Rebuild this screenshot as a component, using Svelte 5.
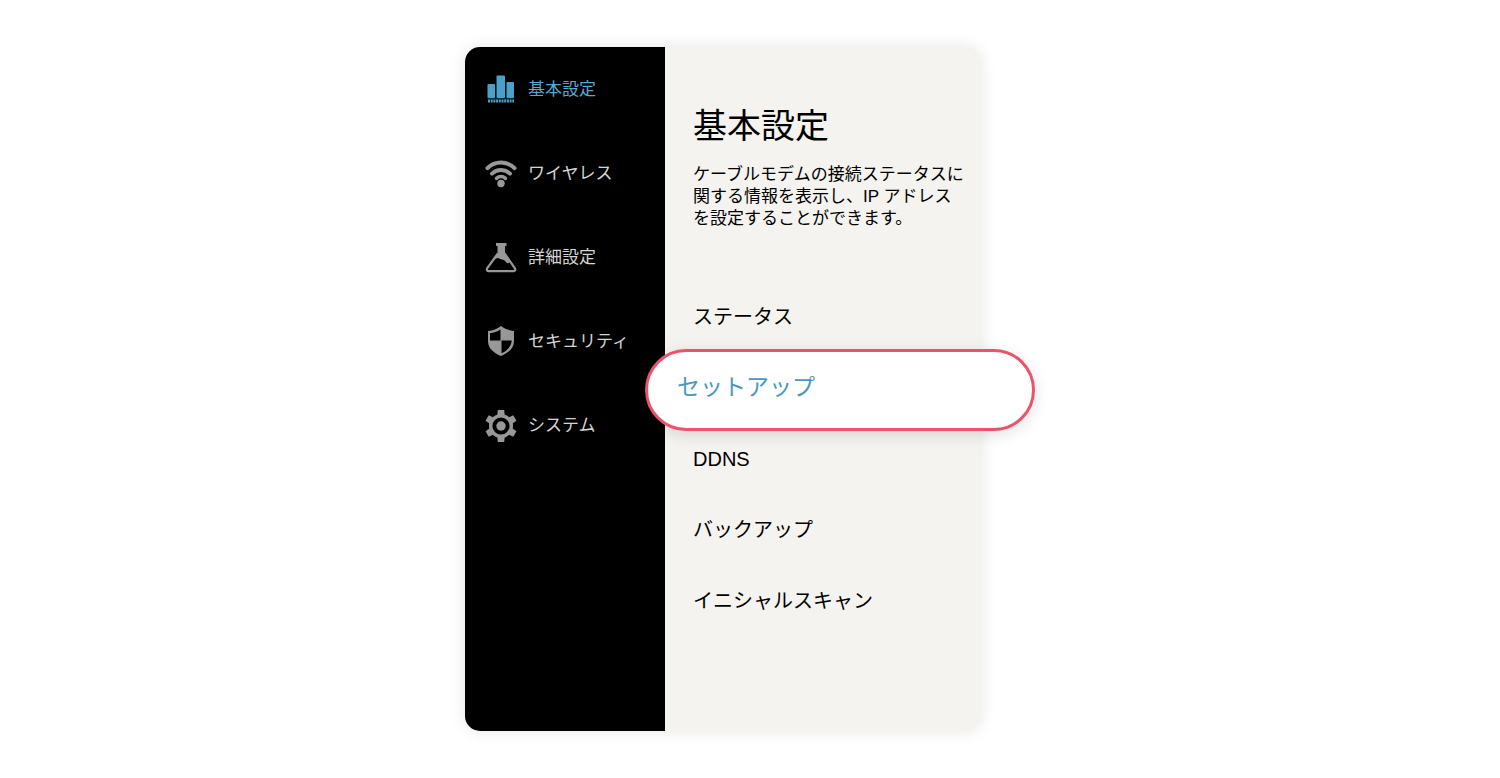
<script>
  const sections = [
    { id: 'basic', label: '基本設定' },
    { id: 'wireless', label: 'ワイヤレス' },
    { id: 'advanced', label: '詳細設定' },
    { id: 'security', label: 'セキュリティ' },
    { id: 'system', label: 'システム' }
  ];

  const pages = ['ステータス', 'セットアップ', 'DDNS', 'バックアップ', 'イニシャルスキャン'];

  let section = 'basic';
  let page = 'セットアップ';
</script>

<main>
  <div class="router">
    <nav class="sidebar">
      {#each sections as item}
        <a href="#{item.id}" class:active={section === item.id} on:click={() => (section = item.id)}>
          <svg viewBox="0 0 32 32" width="32" height="32" fill="currentColor" aria-hidden="true">
            {#if item.id === 'basic'}
              <rect x="2.5" y="11" width="7.5" height="14" rx="1" />
              <rect x="11.5" y="2.500" width="8.5" height="22.500" rx="1" />
              <rect x="21.5" y="9" width="7.5" height="16" rx="1" />
              <path d="M2.500 25.800h26.500" fill="none" stroke="currentColor" stroke-width="1" opacity=".4" />
              <path d="M3 28h26" fill="none" stroke="currentColor" stroke-width="3" stroke-dasharray="2 .7" />
            {:else if item.id === 'wireless'}
              <g fill="none" stroke="currentColor" stroke-width="4" stroke-linecap="round">
                <path d="M2.500 11.200C10 3.600 22 3.600 29.500 11.200" />
                <path d="M7 16.600c5-4.900 13-4.900 18 0" />
                <path d="M11.500 21.300c2.700-2.300 6.300-2.300 9 0" stroke-width="3.500" />
              </g>
              <circle cx="16" cy="26.500" r="3.700" />
            {:else if item.id === 'advanced'}
              <path d="M11 2h10.500v3h-10.500z" />
              <path d="M12.500 4.500h7.500v8l5.500 7.500c-.6 2-2.500 3-4.300 1.200-1.600-1.600-2.300-2.700-4.200-2.700-2-.1-2.600-1.500-4.500-1.500L9 18.500l3.500-6z" />
              <path d="M12.800 12.500L2.300 27c-1 1.700-.2 3.200 1.500 3.200h24.500c1.700 0 2.500-1.500 1.500-3.200L19.600 12.500" fill="none" stroke="currentColor" stroke-width="2.200" />
            {:else if item.id === 'security'}
              <path fill-rule="evenodd" d="M16 1c4 3 8 4.500 13 5v10c0 7-5 11.500-13 15C8 27.500 3 23 3 16V6c5-.5 9-2 13-5zM15.500 4.500C12 6.700 9 7.700 5 8.300v7.200h10.500zM16.500 15.500v12.800c6-3 9.500-6.500 10.300-12.800z" />
            {:else}
              <circle cx="16" cy="17" r="10.300" fill="none" stroke="currentColor" stroke-width="3.400" />
              {#each [0, 60, 120, 180, 240, 300] as angle}
                <path d="M12.800 1h6.400l.6 6.500h-7.600z" transform="rotate({angle} 16 17)" />
              {/each}
              <circle cx="16" cy="17" r="4.700" />
            {/if}
          </svg>
          <span>{item.label}</span>
        </a>
      {/each}
    </nav>

    <section class="panel">
      <h1>基本設定</h1>
      <p>ケーブルモデムの接続ステータスに関する情報を表示し、IP アドレスを設定することができます。</p>
      <ul>
        {#each pages as name}
          <li>
            <a href="#{name}" class:current={page === name} on:click={() => (page = name)}>{name}</a>
          </li>
        {/each}
      </ul>
    </section>
  </div>
</main>

<style>
  :global(body) {
    margin: 0;
    background: #fff;
    font-family: "Liberation Sans", "Noto Sans CJK JP", sans-serif;
  }

  main {
    box-sizing: border-box;
    max-width: 570px;
    margin: 0 auto;
    padding: 47px 54px 47px 0;
  }

  a {
    color: inherit;
    text-decoration: none;
  }

  .router {
    display: grid;
    grid-template-columns: 200px 1fr;
    border-radius: 15px;
    background: #f4f3ef;
    box-shadow: 0 0 16px rgba(0, 0, 0, 0.1);
  }

  .sidebar {
    background: #000;
    color: #d4d4d4;
    border-radius: 15px 0 0 15px;
  }

  .sidebar a {
    display: flex;
    align-items: center;
    gap: 11px;
    height: 84px;
    padding-left: 20px;
    font-size: 17px;
  }

  .sidebar svg {
    flex: none;
    overflow: visible;
    color: #989898;
  }

  .sidebar span {
    padding-bottom: 3px;
  }

  .sidebar .active {
    color: #55aad0;
  }

  .sidebar .active svg {
    color: #4c9fc6;
  }

  .panel {
    padding: 55px 15px 94px 28px;
    color: #000;
  }

  h1 {
    margin: 0 0 14px;
    font-size: 34px;
    font-weight: 400;
    line-height: 48px;
  }

  p {
    margin: 0 0 52px;
    font-size: 17px;
    line-height: 22px;
  }

  ul {
    margin: 0;
    padding: 0;
    list-style: none;
  }

  li {
    position: relative;
    height: 71px;
    font-size: 20px;
    line-height: 71px;
  }

  /* the selected page sits on a pill wider than the panel */
  .current {
    position: absolute;
    box-sizing: border-box;
    top: -4px;
    left: -48px;
    width: 390px;
    height: 82px;
    padding-left: 29px;
    border: 3px solid #e9536b;
    border-radius: 41px;
    background: #fff;
    box-shadow: 0 4px 16px rgba(0, 0, 0, 0.12);
    color: #4897be;
    font-size: 23px;
  }
</style>
